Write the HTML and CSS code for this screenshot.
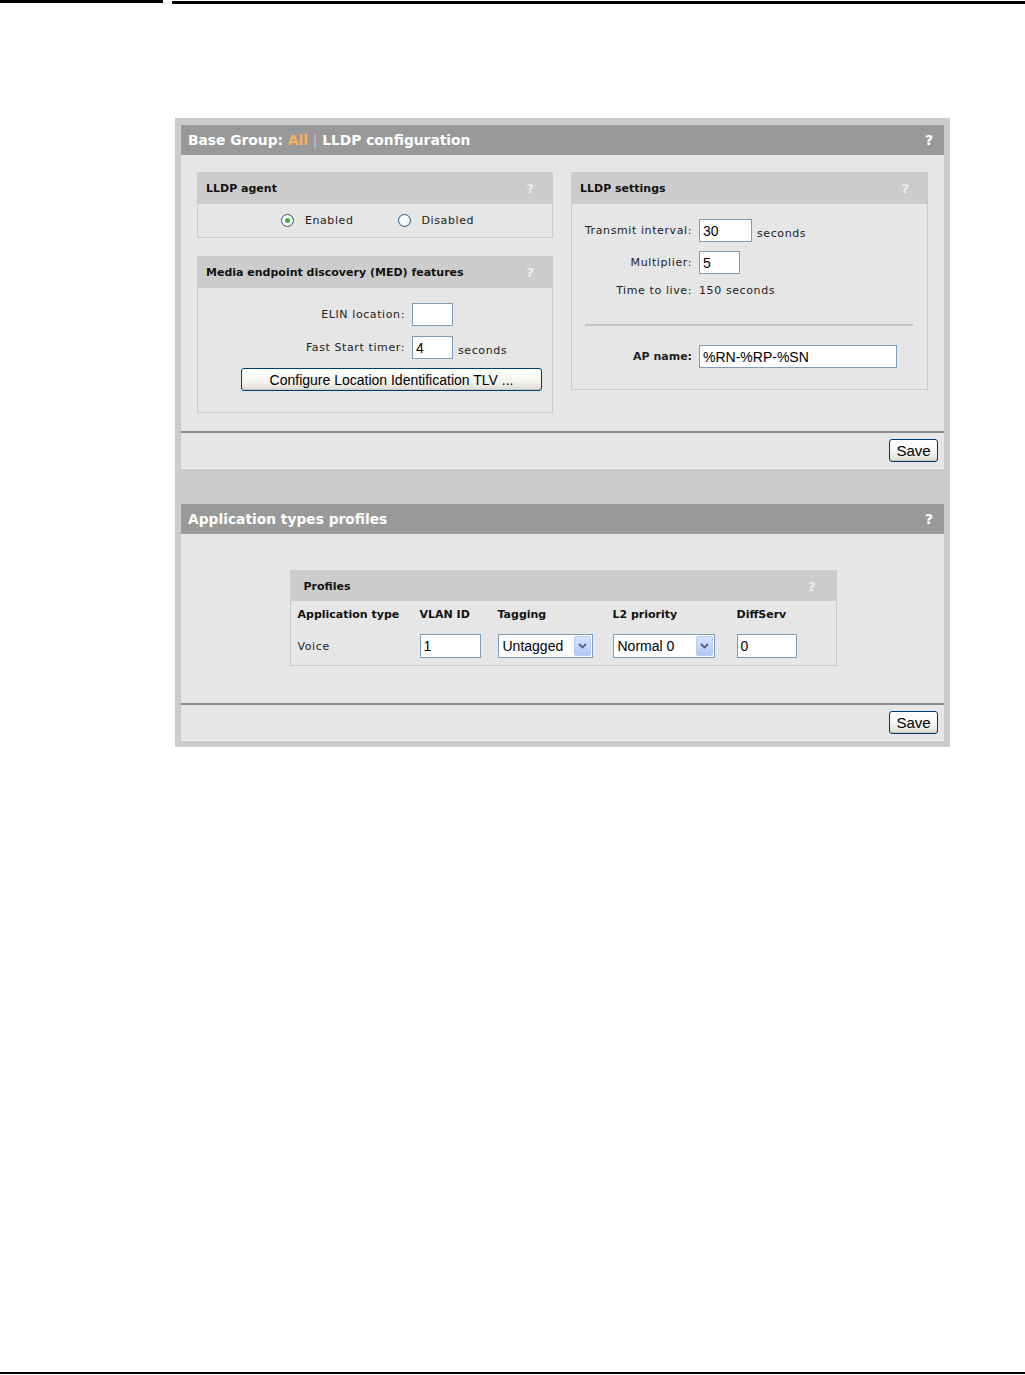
FILE: index.html
```html
<!DOCTYPE html>
<html lang="en">
<head>
    <meta charset="UTF-8">
    <title>LLDP configuration</title>
    <link rel="stylesheet" href="styles.css">
</head>
<body>
    <!-- Page rule -->
    <div class="top-rule">
        <div class="rule-short"></div>
        <div class="rule-long"></div>
    </div>

    <div class="page">
        <div class="frame">
            <!-- LLDP configuration -->
            <div class="section-head">
                <span>Base Group: <span class="accent">All</span> <span class="sep">|</span> LLDP configuration</span>
                <span class="help">?</span>
            </div>
            <div class="section-body">
                <div class="columns">
                    <div class="column">
                        <div class="box">
                            <div class="box-head">LLDP agent <span class="help">?</span></div>
                            <div class="box-body agent-body">
                                <label class="radio"><span class="radio-dot checked"></span>Enabled</label>
                                <label class="radio"><span class="radio-dot"></span>Disabled</label>
                            </div>
                        </div>

                        <div class="box">
                            <div class="box-head">Media endpoint discovery (MED) features <span class="help">?</span></div>
                            <div class="box-body med-body">
                                <div class="form-row">
                                    <span class="label med-label">ELIN location:</span>
                                    <span class="input w41"></span>
                                </div>
                                <div class="form-row">
                                    <span class="label med-label">Fast Start timer:</span>
                                    <span class="input w41">4</span>
                                    <span class="unit">seconds</span>
                                </div>
                                <button class="xp-button config-button">Configure Location Identification TLV ...</button>
                            </div>
                        </div>
                    </div>

                    <div class="column">
                        <div class="box">
                            <div class="box-head">LLDP settings <span class="help">?</span></div>
                            <div class="box-body settings-body">
                                <div class="form-row">
                                    <span class="label set-label">Transmit interval:</span>
                                    <span class="input w53">30</span>
                                    <span class="unit">seconds</span>
                                </div>
                                <div class="form-row">
                                    <span class="label set-label">Multiplier:</span>
                                    <span class="input w41">5</span>
                                </div>
                                <div class="form-row text-row">
                                    <span class="label set-label">Time to live:</span>
                                    <span class="value">150 seconds</span>
                                </div>
                                <div class="divider"></div>
                                <div class="form-row">
                                    <span class="label set-label strong">AP name:</span>
                                    <span class="input w198">%RN-%RP-%SN</span>
                                </div>
                            </div>
                        </div>
                    </div>
                </div>
            </div>
            <div class="section-foot">
                <button class="xp-button">Save</button>
            </div>

            <div class="spacer"></div>

            <!-- Application types profiles -->
            <div class="section-head">
                <span>Application types profiles</span>
                <span class="help">?</span>
            </div>
            <div class="section-body profiles-wrap">
                <div class="box profiles">
                    <div class="box-head">Profiles <span class="help">?</span></div>
                    <div class="box-body profiles-grid">
                        <span class="col-head">Application type</span>
                        <span class="col-head">VLAN ID</span>
                        <span class="col-head">Tagging</span>
                        <span class="col-head">L2 priority</span>
                        <span class="col-head">DiffServ</span>

                        <span class="value">Voice</span>
                        <span class="input w61">1</span>
                        <span class="select w95">Untagged<span class="arrow"><svg width="9" height="6" viewBox="0 0 9 6"><path d="M1 1 L4.5 4.5 L8 1" fill="none" stroke="#4d6185" stroke-width="1.8"/></svg></span></span>
                        <span class="select w102">Normal 0<span class="arrow"><svg width="9" height="6" viewBox="0 0 9 6"><path d="M1 1 L4.5 4.5 L8 1" fill="none" stroke="#4d6185" stroke-width="1.8"/></svg></span></span>
                        <span class="input w60">0</span>
                    </div>
                </div>
            </div>
            <div class="section-foot">
                <button class="xp-button">Save</button>
            </div>
        </div>
    </div>

    <div class="bottom-rule"></div>
</body>
</html>
```

FILE: styles.css
```css
/* Base */
* {
    margin: 0;
    padding: 0;
    box-sizing: border-box;
}

body {
    font-family: 'DejaVu Sans', Verdana, sans-serif;
    font-size: 11px;
    color: #222;
    background: #fff;
    width: 1025px;
    height: 1375px;
    position: relative;
}

/* Page rules */
.top-rule {
    display: flex;
    gap: 9px;
    height: 5px;
}

.rule-short {
    width: 163px;
    height: 3px;
    background: #000;
}

.rule-long {
    flex: 1;
    height: 3px;
    margin-top: 1px;
    background: #000;
}

.bottom-rule {
    position: absolute;
    left: 0;
    right: 0;
    top: 1372px;
    height: 2px;
    background: #000;
}

.page {
    padding: 113px 0 0 175px;
}

/* Outer frame */
.frame {
    width: 775px;
    background: #ccc;
    padding: 7px 6px 6px 6px;
}

.section-head {
    height: 30px;
    background: #999;
    color: #fff;
    font-family: 'DejaVu Sans', Verdana, sans-serif;
    font-weight: bold;
    font-size: 13.8px;
    display: flex;
    align-items: center;
    justify-content: space-between;
    padding: 0 11px 0 7px;
}

.section-head .accent {
    color: #fbb05c;
}

.section-head .sep {
    color: #c4c4c4;
    font-weight: normal;
}

.section-body {
    background: #e6e6e6;
    padding: 17px 16px 18px 16px;
    border-bottom: 2px solid #8a8a8a;
}

.section-foot {
    background: #e6e6e6;
    height: 36px;
    display: flex;
    align-items: center;
    justify-content: flex-end;
    padding-right: 6px;
    border-bottom: 1px solid #ededed;
}

.spacer {
    height: 35px;
}

/* Columns */
.columns {
    display: flex;
    gap: 18px;
}

.column {
    display: flex;
    flex-direction: column;
    gap: 18px;
}

.column:first-child {
    width: 356px;
}

.column:last-child {
    width: 357px;
}

/* Boxes */
.box {
    border: 1px solid #cbcbcb;
}

.box-head {
    background: #ccc;
    height: 31px;
    font-weight: bold;
    display: flex;
    align-items: center;
    justify-content: space-between;
    padding: 0 18px 0 8px;
    color: #111;
}

.box-head .help {
    color: #eee;
    font-size: 13px;
}

.help {
    font-size: 14px;
    font-weight: bold;
}

.box-body {
    background: #e6e6e6;
}

/* Regular text is a little looser than the default font */
.label,
.unit,
.value,
.radio {
    letter-spacing: 0.6px;
}

.label.strong {
    letter-spacing: 0;
}

/* LLDP agent */
.agent-body {
    height: 33px;
    display: flex;
    align-items: center;
    justify-content: center;
    gap: 44px;
    padding-left: 5px;
}

.radio {
    display: flex;
    align-items: center;
    gap: 11px;
}

.radio-dot {
    width: 13px;
    height: 13px;
    border-radius: 50%;
    border: 1px solid #2a5b86;
    background: radial-gradient(circle at 40% 40%, #fff 30%, #dcdcd6 100%);
    display: flex;
    align-items: center;
    justify-content: center;
}

.radio-dot.checked::after {
    content: '';
    width: 5px;
    height: 5px;
    border-radius: 50%;
    background: #3fae3c;
}

/* Form rows */
.form-row {
    display: flex;
    align-items: center;
    height: 23px;
}

.label {
    text-align: right;
    margin-right: 7px;
    color: #222;
}

.label.strong {
    font-weight: bold;
}

.med-label {
    width: 207px;
}

.set-label {
    width: 120px;
}

.unit {
    margin-left: 5px;
    margin-top: 6px;
}

.input {
    height: 23px;
    background: #fff;
    border: 1px solid #7f9db9;
    font-family: 'Liberation Sans', Arial, sans-serif;
    font-size: 14px;
    color: #000;
    display: flex;
    align-items: center;
    padding-left: 3px;
}

.w41 { width: 41px; }
.w53 { width: 53px; }
.w60 { width: 60px; }
.w61 { width: 61px; }
.w198 { width: 198px; }
.w95 { width: 95px; }
.w102 { width: 102px; }

.med-body {
    padding: 15px 0 21px 0;
    display: flex;
    flex-direction: column;
    gap: 10px;
}

.config-button {
    margin-left: 43px;
    width: 301px;
    margin-top: -1px;
}

.settings-body {
    padding: 15px 0 21px 0;
    display: flex;
    flex-direction: column;
}

.settings-body .form-row + .form-row {
    margin-top: 9px;
}

.settings-body .text-row {
    height: 14px;
    margin-top: 10px;
}

.divider {
    height: 2px;
    background: #c4c4c4;
    margin: 27px 14px 19px 13px;
}

/* XP style button */
.xp-button {
    font-family: 'Liberation Sans', Arial, sans-serif;
    font-size: 14px;
    color: #000;
    height: 23px;
    padding: 0 6px;
    border: 1px solid #003c74;
    border-radius: 3px;
    background: linear-gradient(#ffffff 0%, #f4f4f0 60%, #dcdcd4 100%);
    box-shadow: inset 0 -1px 0 #cdcac0;
}

.section-foot .xp-button {
    width: 49px;
    font-size: 15px;
    padding: 0;
}

/* Profiles */
.profiles-wrap {
    display: flex;
    justify-content: center;
    padding: 36px 0 37px 1px;
}

.profiles {
    width: 547px;
}

.profiles .box-head {
    height: 30px;
    padding-left: 13px;
    padding-right: 20px;
}

.profiles-grid {
    display: grid;
    grid-template-columns: 122px 78px 115px 124px auto;
    grid-template-rows: 26px 24px;
    row-gap: 7px;
    align-items: center;
    padding: 0 0 7px 7px;
}

.col-head {
    font-weight: bold;
    color: #111;
}

.profiles-grid .input {
    height: 24px;
}

.select {
    height: 24px;
    background: #fff;
    border: 1px solid #7f9db9;
    font-family: 'Liberation Sans', Arial, sans-serif;
    font-size: 14px;
    color: #000;
    display: flex;
    align-items: center;
    justify-content: space-between;
    padding: 0 1px 0 4px;
}

.arrow {
    width: 17px;
    height: 20px;
    border-radius: 2px;
    background: linear-gradient(#d6e2fe, #b4c8f6);
    border: 1px solid #b9cbf3;
    display: flex;
    align-items: center;
    justify-content: center;
}
```
